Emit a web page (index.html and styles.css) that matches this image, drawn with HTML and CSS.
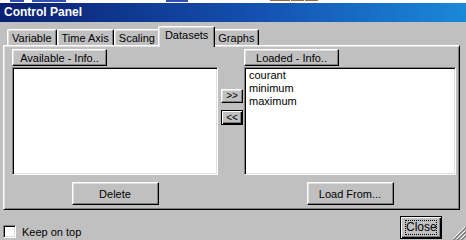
FILE: index.html
```html
<!DOCTYPE html>
<html lang="en">
<head>
    <meta charset="UTF-8">
    <title>Control Panel</title>
    <link rel="stylesheet" href="styles.css">
</head>
<body>
    <div class="strip">
        <span class="mark blue m1"></span>
        <span class="mark blue m2"></span>
        <span class="mark blue m3"></span>
        <span class="mark brown m4"></span>
        <span class="mark brown m5"></span>
        <span class="mark brown m5"></span>
    </div>
    <div class="titlebar">Control Panel</div>

    <div class="tabs">
        <div class="tab">Variable</div>
        <div class="tab">Time Axis</div>
        <div class="tab">Scaling</div>
        <div class="tab active">Datasets</div>
        <div class="tab">Graphs</div>
    </div>

    <div class="panel">
        <button class="btn head-btn col-left">Available - Info..</button>
        <button class="btn head-btn col-right">Loaded - Info..</button>

        <div class="listbox col-left"></div>
        <div class="arrows">
            <button class="btn arrow-btn">&gt;&gt;</button>
            <button class="btn arrow-btn default">&lt;&lt;</button>
        </div>
        <div class="listbox col-right">
            <div class="item">courant</div>
            <div class="item">minimum</div>
            <div class="item">maximum</div>
        </div>

        <button class="btn foot-btn col-left">Delete</button>
        <button class="btn foot-btn col-right">Load From...</button>
    </div>

    <div class="bottom">
        <label class="keep">
            <span class="checkbox"></span>
            <span>Keep on top</span>
        </label>
        <button class="btn close-btn default"><span class="focus">Close</span></button>
    </div>

    <svg class="grip" width="14" height="14" viewBox="0 0 14 14">
        <path d="M13 1 L1 13 M13 5 L5 13 M13 9 L9 13" stroke="#fff" stroke-width="1"/>
        <path d="M14 1 L1 14 M14 2 L2 14 M14 5 L5 14 M14 6 L6 14 M14 9 L9 14 M14 10 L10 14" stroke="#808080" stroke-width="1"/>
    </svg>
</body>
</html>
```

FILE: styles.css
```css
body {
    margin: 0;
    width: 466px;
    height: 240px;
    background: #C0C0C0;
    font-family: 'Liberation Sans', Arial, sans-serif;
    font-size: 11px;
    color: #000000;
    position: relative;
    overflow: hidden;
}
.strip {
    height: 3px;
    background: #FFFFFF;
    display: flex;
    align-items: flex-start;
}
.mark {
    height: 2px;
}
.mark.blue {
    background: #3050B0;
}
.mark.brown {
    height: 1px;
    background: #9A6A3A;
    margin-right: 1px;
}
.m1 { margin-left: 10px; width: 14px; }
.m2 { margin-left: 8px; width: 34px; }
.m3 { margin-left: 100px; width: 22px; }
.m4 { margin-left: 82px; width: 20px; }
.m5 { width: 13px; }
.titlebar {
    height: 19px;
    line-height: 19px;
    padding-left: 4px;
    background: linear-gradient(to right, #0A2070 0%, #1450B0 55%, #1A88D8 100%);
    color: #FFFFFF;
    font-weight: bold;
    font-size: 12px;
}
.tabs {
    display: flex;
    align-items: flex-end;
    height: 19px;
    margin-top: 4px;
    padding-left: 7px;
}
.tab {
    box-sizing: border-box;
    height: 16px;
    line-height: 14px;
    padding: 1px 4px 0;
    border-top: 1px solid #FFFFFF;
    border-left: 1px solid #FFFFFF;
    border-right: 1px solid #000000;
    border-radius: 2px 2px 0 0;
    box-shadow: inset -1px 0 #808080, inset 1px 1px #DFDFDF;
}
.tab.active {
    height: 21px;
    margin: 0 -2px -2px;
    padding: 1px 6px 0;
    position: relative;
    z-index: 1;
    background: #C0C0C0;
}
.panel {
    box-sizing: border-box;
    width: 457px;
    height: 165px;
    margin-left: 3px;
    padding: 3px 0 4px 8px;
    border: 1px solid;
    border-color: #FFFFFF #000000 #000000 #FFFFFF;
    box-shadow: inset 1px 1px #DFDFDF, inset -1px -1px #808080;
    display: grid;
    grid-template-columns: 206px 26px 212px;
    grid-template-rows: 17px 1fr 23px;
}
.col-left {
    grid-column: 1;
}
.col-right {
    grid-column: 3;
}
.btn {
    box-sizing: border-box;
    padding: 0;
    background: #C0C0C0;
    font-family: inherit;
    font-size: 11px;
    color: #000000;
    border: 1px solid;
    border-color: #FFFFFF #000000 #000000 #FFFFFF;
    box-shadow: inset -1px -1px #808080, inset 1px 1px #DFDFDF;
}
.btn.default {
    border: 1px solid #000000;
    box-shadow: inset 1px 1px #FFFFFF, inset -1px -1px #000000, inset -2px -2px #808080;
}
.head-btn {
    grid-row: 1;
    justify-self: start;
    width: 95px;
    height: 17px;
}
.listbox {
    grid-row: 2;
    box-sizing: border-box;
    height: 108px;
    margin: 1px 0 7px;
    padding: 1px 3px;
    background: #FFFFFF;
    border: 1px solid;
    border-color: #808080 #FFFFFF #FFFFFF #808080;
    box-shadow: inset 1px 1px #000000, inset -1px -1px #DFDFDF;
}
.item {
    height: 13px;
    line-height: 13px;
    padding-left: 1px;
}
.arrows {
    grid-row: 2;
    grid-column: 2;
    display: flex;
    flex-direction: column;
    align-items: flex-start;
    gap: 7px;
    padding: 23px 0 0 3px;
}
.arrow-btn {
    width: 22px;
    height: 14px;
    line-height: 10px;
    font-size: 10px;
}
.arrow-btn.default {
    height: 15px;
}
.foot-btn {
    grid-row: 3;
    justify-self: center;
    width: 87px;
    height: 23px;
}
.bottom {
    display: flex;
    justify-content: space-between;
    align-items: flex-end;
    height: 26px;
    padding: 3px 24px 0 3px;
}
.keep {
    display: flex;
    align-items: center;
    gap: 6px;
    margin-bottom: 1px;
}
.checkbox {
    box-sizing: border-box;
    width: 13px;
    height: 13px;
    background: #FFFFFF;
    border: 1px solid;
    border-color: #808080 #FFFFFF #FFFFFF #808080;
    box-shadow: inset 1px 1px #000000, inset -1px -1px #DFDFDF;
}
.close-btn {
    width: 42px;
    height: 23px;
    display: flex;
    align-items: center;
    justify-content: center;
}
.close-btn .focus {
    box-sizing: border-box;
    width: 32px;
    height: 15px;
    line-height: 13px;
    border: 1px dotted #000000;
    font-size: 12px;
}
.grip {
    position: absolute;
    right: 0;
    bottom: 0;
}
```
